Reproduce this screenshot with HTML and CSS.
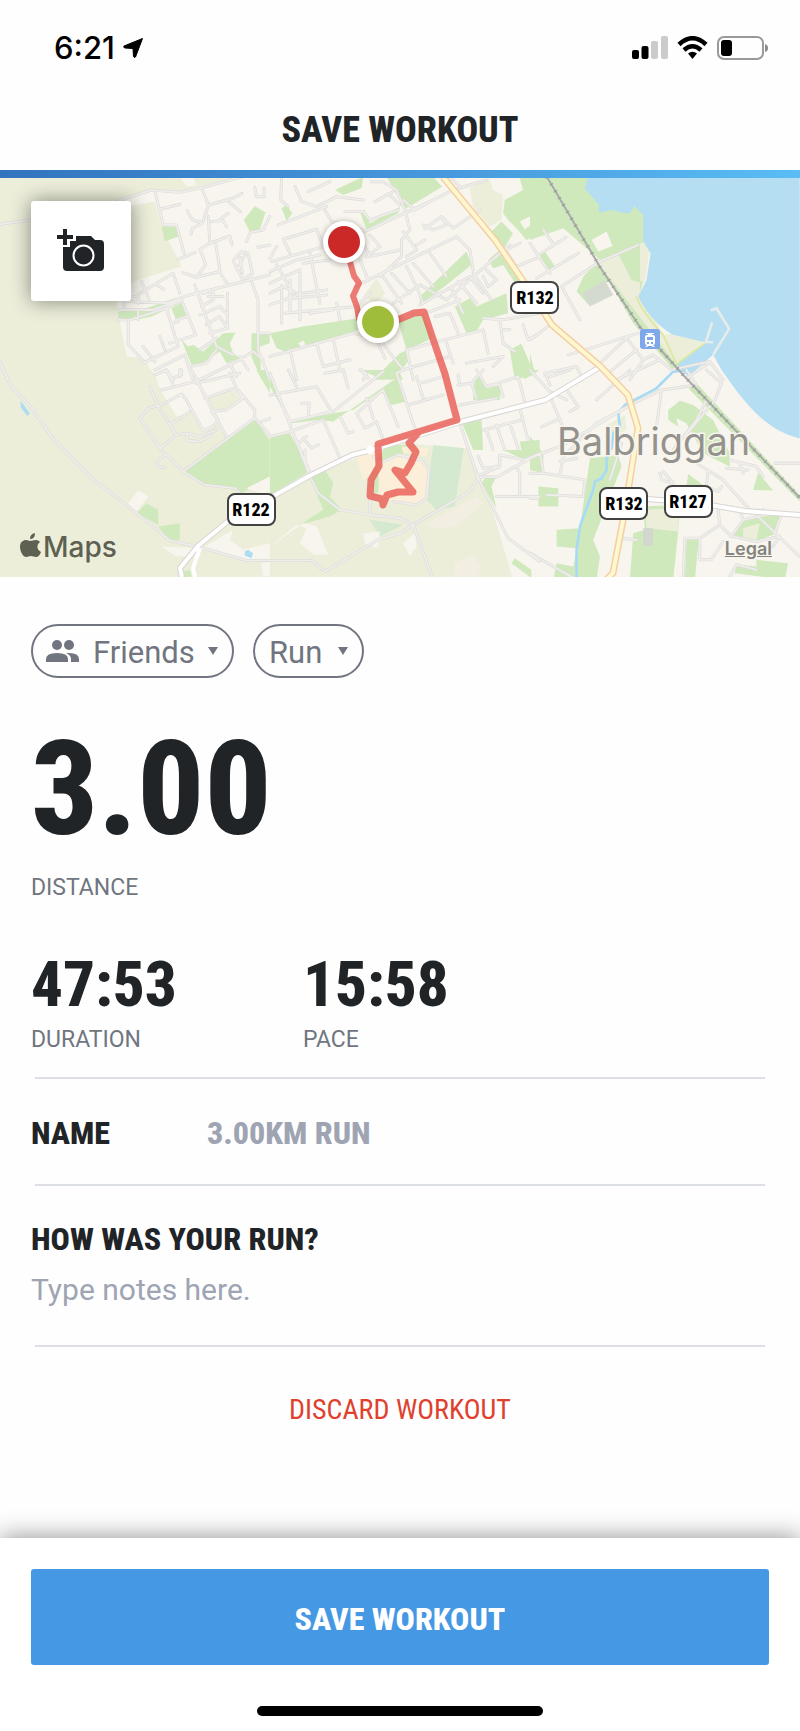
FILE: index.html
```html
<!DOCTYPE html>
<html lang="en">
<head>
<meta charset="utf-8">
<meta name="viewport" content="width=device-width, initial-scale=1">
<title>Save Workout</title>
<link rel="stylesheet" href="styles.css">
</head>
<body>
<div class="status">
  <div class="status-time">6:21
    <svg width="20" height="20" viewBox="0 0 20 20"><path d="M19.500 .500 12.500 19Q11 20 10.500 18.500L10 10.500 2 10Q0 9.500 1 8Z" stroke="#000" stroke-linejoin="round"/></svg>
  </div>
  <div class="status-icons">
    <svg width="36" height="24" viewBox="0 0 36 24"><rect y="14" width="7" height="9" rx="2"/><rect x="9.500" y="10" width="7" height="13" rx="2"/><g fill="#cbcbcb"><rect x="19" y="5" width="7" height="18" rx="2"/><rect x="29" y="0" width="7" height="23" rx="2"/></g></svg>
    <svg width="31" height="24" viewBox="0 0 31 24"><g fill="none" stroke="#000" stroke-width="4.500"><path d="M2 8.500Q15.500-4 29 8.500"/><path d="M7 14Q15.500 6.500 24 14"/></g><path d="M11 17.500Q15.500 14 20 17.500L15.500 23Z"/></svg>
    <svg width="51" height="24" viewBox="0 0 51 24"><rect x="1" y="1" width="45" height="22" rx="6" fill="none" stroke="#999" stroke-width="2"/><rect x="4" y="4" width="11" height="16" rx="3"/><path d="M48 8Q51 9 51 12T48 16Z" fill="#888"/></svg>
  </div>
</div>
<header class="header"><h1>SAVE WORKOUT</h1></header>
<div class="accent"></div>

<section class="map" aria-label="Workout route">
<svg class="map-art" viewBox="0 178 800 399" preserveAspectRatio="xMidYMid slice">
<defs>
  <g id="minor">
    <path transform="translate(0 170) scale(.333)" d="M0 163 90 150M350 95 455 60 540 67 610 52 730 20M465 62 490 165H530L553 250M480 118 540 103M535 268 585 248M605 52 626 105 608 160 578 150 562 122M608 160 578 175 574 192M626 105 680 90 722 125M680 90 700 84 726 70M626 140 630 220 600 238 618 285 590 322 550 308M630 220 690 198 697 225M648 222 662 310 685 345M590 322 660 305M660 150 685 130M636 155 670 152 680 170M765 52 770 80H793V55M740 215 752 187 790 180 810 140M775 232 810 225M725 245 700 272 728 328 758 312 745 250ZM720 262 728 310M735 255 718 285M380 395 520 310 540 370M425 335 448 390M400 380H415V400M470 345 492 358M385 395 500 400 560 378 810 315M355 420H460L545 390M372 395V420M415 420V450M355 450H390L500 415 535 530 435 578 385 525V455M500 415 545 390 588 495 510 520M430 530 465 575M480 500 495 540M530 450 560 440M515 460 535 455M465 600 555 555 580 630M500 600 520 630M540 600V620M585 345 650 530 700 555M610 370 640 365V390L605 410M625 380 670 380M600 435 660 410 683 435M620 465 660 440 683 475M630 490 683 475V370M600 540 650 505M750 320 775 390V540L810 630M775 490H810M570 590 620 580 650 540M600 630 700 580 760 545 790 570M690 580 710 620M720 560 745 600M0 575 22 630"/>
    <path transform="translate(270 170) scale(.333)" d="M35 20 32 90 55 110M75 50 95 95 140 110 200 80 280 90M115 65 180 35M25 165 170 110M40 208 140 178 160 230 5 275M40 208 60 250M0 265 20 230M165 120 185 155 280 180M225 125 280 125 300 150 385 120M305 35H340L380 60 405 120 420 180 395 210V260L330 320M315 95 370 65M285 185 480 95 550 60 650 30M360 75 390 105M400 90 435 120 480 95M465 175 515 140 530 165 490 180 460 165M515 140 550 175 630 120M400 185 440 240 410 260M440 225 465 210M300 195 330 230 290 260M280 220 300 260 390 240M270 270 295 330M255 350 560 200 600 240 610 300M410 290 440 350 460 400M340 320 395 400M365 310 420 370M430 280 490 350M480 250 530 320M370 400 450 345 530 390 720 225M450 405 600 320 640 370M545 355 580 430M565 335 620 400M610 310 665 390M640 320 655 350 680 330 650 300M470 430 570 390M0 305 80 270 150 255M0 340 90 300M0 370 40 350 90 375M0 405 100 370 170 360M35 345V460M60 330V425M90 310V450M120 250 150 400M20 285 70 370M100 280 180 270M70 385 170 375M45 430 260 410 300 370M200 400 210 450M120 430 190 420M410 540 640 480 655 550M410 540 430 630M495 440 540 430 565 490M530 520 550 580M640 445 700 450 810 430M690 450 700 520 735 545M700 480H720M760 465 775 510 810 490M590 580 700 560 670 590M0 560 250 490 330 510 400 600 540 560M60 540 80 630M140 520 160 590 240 570M190 510 210 600M270 600 290 610 280 630M320 510 345 565M700 230 740 290 810 260M710 240 750 220M540 20 570 50"/>
    <path transform="translate(530 170) scale(.333)" d="M0 220 60 310M25 255 108 202M40 180 72 225M20 325 145 250M95 350 210 275 325 225M95 350 150 450M0 510 60 465M115 555 325 490M290 505 340 570 300 630M340 570 370 555 425 600 540 575 580 630M195 595 290 505M235 610 320 540M260 630 390 570M45 610 140 590 155 620M470 625 540 577"/>
    <path transform="translate(0 370) scale(.333)" d="M10 0 35 50 95 115 155 200 270 320 410 430 510 512 610 535 740 572H810M450 50 475 110 530 195 480 235M470 108 445 115 420 145 480 235 550 305 615 345 705 355 725 375M495 255 470 275 475 292H495M475 110 545 72 560 90 610 182 640 170M510 165 570 125M530 195 560 190 600 200 650 180M560 190 563 212 600 215 635 195M465 15 500 0M485 60 585 35 640 10M500 0 520 45M545 0V15L515 25M575 0 680 200M590 40 720 10M615 85 700 55 730 85 680 120 635 125M690 10 710 55 765 120V145L550 305M640 170 655 150 640 130M765 145 810 195M785 155 810 145"/>
    <path transform="translate(270 370) scale(.333)" d="M0 75 140 50 185 125 60 155 25 80M55 0 80 50M0 10 120 320 145 370 210 420 300 435 390 445 430 465 390 490 325 510 165 605 125 572H0M430 465 490 630M430 465 600 365 625 325 570 160M625 325 715 505 810 575M625 325 640 320 680 322 810 250M190 125 340 5M95 100 118 100 115 140M0 200 60 185 160 150 210 265M70 190 120 310M100 205 125 235 145 225M105 240V270M110 200 85 220M210 140 235 190 250 185M260 130 285 175 320 155 340 210M290 85 310 145M260 130 340 60 385 170M380 10 440 190M380 10 400 0M415 105 520 75M440 20 460 85M450 40 520 20M570 105 680 85M565 45 605 40 620 85M565 15 570 45M605 40 640 0M620 0 650 50 745 20 765 95M650 50 660 45 690 45 700 80M640 180 755 150M650 180 670 240M680 165 705 240M720 160 745 235M750 115 775 210M625 260 640 295 690 290V255L765 270 810 250M690 290 620 320M740 290 750 310V380M680 380H810M275 0 295 25M165 10 220 0 235 55M300 380V435M330 280 385 255 455 270 478 300 470 385 440 405 370 395M310 260 330 280"/>
    <path transform="translate(530 370) scale(.333)" d="M0 265 100 225 310 100 395 60 500 45 470 0M310 100 200 160 100 260 90 315M395 60 380 170M0 0 60 65 110 90M60 80 105 185M110 60 145 110 120 125M35 170 90 145M45 10 60 45M60 20 120 0M150 25 100 55M200 90 300 0M530 0 575 40 555 90 465 200M240 330 275 220M30 250 40 310 165 330 160 380 50 375M0 310 40 310M90 275 140 265M0 385 25 385M390 310 395 330 430 340 400 305M530 90 500 150 430 240M500 280 580 330 660 420M535 300 530 350 565 365 575 350M590 295 655 300M630 280 640 310M735 280H810M600 270 680 290 700 320M565 420 570 465 510 505 465 505 460 630M570 465 605 500 640 450 630 420M640 450 685 440 700 420M685 440 810 560M610 500 680 515 750 500 730 530M510 505V570M510 570H545L580 515M755 435 735 490M620 585 600 620M620 585 680 600M270 505 320 510M0 550 140 630"/>
  </g>
</defs>
<rect y="170" width="800" height="410" fill="#f8f5ee"/>
<g transform="translate(0 170) scale(.333)">
  <path fill="#eceeda" d="M0 20H540L560 50 590 45 580 20H720L600 48 540 62 455 58 350 90V115L465 95 485 170 545 290 400 335 350 400 380 560 430 565 475 635H0Z"/>
  <path fill="#cfe9bd" d="M485 170H530L535 200 495 215ZM765 108 797 128 780 180 750 185 732 150ZM355 425 415 420V450L355 445ZM418 422 525 385 530 405 455 440 418 448ZM515 415 545 397 560 440 530 455ZM545 510 565 530 580 525 610 545 650 510 670 490 707 488 690 520 700 550 720 565 680 580 660 545 600 585H575ZM755 490H810V520L780 530 785 630 755 560Z"/>
</g>
<g transform="translate(270 170) scale(.333)">
  <path fill="#cfe9bd" d="M195 60 280 20 275 55 220 75ZM35 115 50 105 67 130 50 153ZM270 125 285 120 300 160 390 110 385 130 290 180ZM350 20H490L517 50 405 118ZM0 490 100 470 265 445 270 480 50 547 20 535ZM450 380 590 245 605 285 530 345 450 405ZM555 410 600 385 620 410 710 370 715 430 640 450 620 485 590 490ZM385 455 460 430 490 505 410 540ZM310 630 390 550 415 540V575L370 630ZM720 540 755 522 795 615 735 630ZM750 25 810 10V190L770 210 740 175 715 150 700 130 705 90 760 60ZM665 185 695 155 730 190 700 240 670 215ZM655 270 690 240 770 330 740 345 700 285 670 295Z"/>
  <path fill="#eceeda" d="M600 55 660 25 670 60 700 75 695 150 660 170 610 110ZM280 380 320 325 345 370 320 400Z"/>
  <path fill="#f8f5ee" d="M750 155 780 140 790 160 765 178ZM85 520 100 512 110 530 95 532Z"/>
</g>
<g transform="translate(530 170) scale(.333)">
  <path fill="#cfe9bd" d="M0 20H190L220 100H300L345 130V215L330 225 340 335 330 370 450 590 430 600 310 460 235 330 180 410 140 365 160 320 210 270 100 175 0 210ZM25 255 45 245 75 290 60 305ZM0 550 15 610 0 620Z"/>
  <path fill="#eceeda" d="M205 280 265 250 305 330 345 335 360 230 345 215 330 222 330 380 400 495 450 490 525 515 440 585Z"/>
  <path fill="#cfe9bd" d="M270 250 330 222V338L305 330Z"/>
  <path fill="#d5dad1" d="M158 370 225 330 250 375 180 410Z"/><path fill="#f8f5ee" d="M185 210 230 185 248 228 205 245Z"/>
  <path fill="#b5def2" d="M175 20H810V806C720 785 660 725 575 600L550 555 475 620 440 585 530 518 430 495C390 475 345 425 325 380L350 330 362 250 340 215V135L313 108 300 130 270 128 250 120 207 128V105L165 55Z"/>
  <path fill="none" stroke="#dce89d" stroke-width="5" d="M318 380Q340 430 400 495L440 583 525 520"/>
  <path fill="none" stroke="#e5ece9" stroke-width="8" d="M550 555 598 477 560 415 543 422M527 520 547 457M525 515 550 518"/>
</g>
<g transform="translate(0 370) scale(.333)">
  <path fill="#eceeda" d="M0 0H455L485 65 530 140 580 125 605 185 650 155 680 200 810 320V630H0ZM615 85 690 55 720 85 680 120 640 125Z"/>
  <path fill="#cfe9bd" d="M550 305 765 145 810 210V320L725 370 700 352 615 345ZM410 430 440 400 475 420V465ZM475 470 540 460V510L510 515ZM550 605 570 600 575 620 550 625ZM770 0H795L810 30V70Z"/>
  <path fill="#f8f5ee" d="M385 400 415 362 445 380 410 425ZM485 530 600 535 590 560H530ZM615 530 700 480 690 510 730 540 810 520V575L740 570ZM785 580 810 575V620H790ZM740 355 810 320V380Z"/>
  <path fill="#aedcf0" d="M62 92 90 130 82 138 62 112ZM735 545 745 540 760 550 755 565 735 557Z"/>
</g>
<g transform="translate(270 370) scale(.333)">
  <path fill="#eceeda" d="M0 390 125 320 255 265 330 245 400 220 590 235 635 325 680 460 730 630H0Z"/>
  <path fill="#cfe9bd" d="M0 200 60 190 120 305 0 375ZM0 20 65 160 145 150 190 155 385 20 405 95 365 105 335 60 250 120 190 130 60 155 0 50ZM270 0H385L400 30 320 20ZM120 325 165 300 190 340 180 380 215 420 180 440 90 465 160 420ZM350 225 410 225 480 240 470 260 385 250 320 280 330 360 310 380 300 300ZM575 155 635 150 640 240 610 240ZM615 20 630 10 650 55 695 45 690 90 610 90ZM750 0H810L765 28ZM750 215 810 210V260L765 270 700 240 755 240ZM645 325 680 320 665 350 680 415 635 340ZM735 565 785 600V625L725 580Z"/>
  <path fill="#d4e9cf" d="M490 225 582 235 555 410 500 420 470 390ZM300 450 400 465 330 500Z"/>
  <path fill="#fbefd9" d="M260 265 325 240 315 300 280 330ZM330 280 385 255 455 270 478 300 470 385 440 405 370 395 325 370ZM395 230 480 235 470 260 400 250Z"/>
  <path fill="#f8f5ee" d="M0 530 80 465 110 475 90 520 130 555 175 555 140 470 100 460M280 490 330 485 325 535 285 520ZM400 520 435 490 440 530 420 560Z"/>
  <path fill="#f2efe2" d="M470 460 620 380 640 400 560 470 500 475ZM555 580 610 555 635 590 620 630H555Z"/>
</g>
<g transform="translate(530 370) scale(.333)">
  <path fill="#cfe9bd" d="M0 200 40 250V310L0 300ZM25 350 85 355V410H25ZM180 265 265 255 275 290 190 510 210 560 200 630H70L80 580 130 590 140 535 80 530V480L150 475ZM415 120 450 92 490 105 550 150 600 250 600 290 520 250 470 160 440 145 445 170 415 150ZM475 45 505 45 810 375V395L480 60ZM475 312 520 345 470 345ZM340 410 450 405 445 485 430 630H300L310 490 345 480ZM610 500 640 445 755 435 740 490 680 515ZM685 308 730 362 670 360ZM470 510H507L495 630H465ZM620 585 680 590V570L775 580 765 630 615 610Z"/>
  <path fill="#eceeda" d="M230 165 285 135 290 180 250 200ZM345 420 445 415V485L350 475ZM640 475 690 460 680 510 640 505Z"/><path fill="#d2d8ce" d="M340 475H370V528H340Z"/>
  <path fill="none" stroke="#a7dbf5" stroke-width="8" stroke-linejoin="round" d="M480 0 430 5 380 55 285 105 265 130 270 170 250 190 245 235 230 265V300L215 325 195 335 190 360 175 400 150 470 140 540V630"/>
</g>
<use href="#minor" class="road-edge"/><use href="#minor" class="road-fill"/>
<g fill="none" stroke-linejoin="round">
  <path d="M182 577 180 568 198 546 227 522 270 498 311 475 352 455 372 450 460 422 545 400 600 367" stroke="#d8d6d4" stroke-width="6"/>
  <path d="M182 577 180 568 198 546 227 522 270 498 311 475 352 455 372 450 460 422 545 400 600 367M195 577 193 568 200 548" stroke="#fff" stroke-width="4"/>
  <path d="M648 499 660 500 710 505 745 511 800 515" stroke="#d8d6d4" stroke-width="6"/><path d="M648 499 660 500 710 505 745 511 800 515" stroke="#fff" stroke-width="4"/>
  <path d="M443 177 495 240 526 285 552 325 600 366 628 395 638 428 625 510 613 573 606 580" stroke="#f5cfa4" stroke-width="7"/>
  <path d="M443 177 495 240 526 285 552 325 600 366 628 395 638 428 625 510 613 573 606 580" stroke="#fff7cf" stroke-width="4"/>
  <path d="M547 177 600 267 640 327 686 378 740 435 800 498" stroke="#aaa" stroke-width="2"/>
  <path d="M547 177 600 267 640 327 686 378 740 435 800 498" stroke="#999" stroke-width="4" stroke-dasharray="1 7"/>
</g>
<circle cx="370" cy="450" r="4" fill="#fff"/>
<g fill="none" stroke="#e95e57" stroke-opacity=".82" stroke-linecap="round" stroke-linejoin="round">
  <path stroke-width="6" d="M350 262 354 276 359 283 353 296 357 307 359 319"/>
  <path stroke-width="7" d="M395 321 414 313 424 312 434 342 445 374 457 420 378 444 379 466 371 480 370 496 382 499 383 505 387 495 398 492 413 492 395 470 405 473 411 463 416 452 409 443 418 433"/>
</g>
<g class="pin" fill="#fff"><circle cx="344" cy="242" r="21"/><circle cx="378" cy="322" r="21"/></g>
<circle cx="344" cy="242" r="16" fill="#ca2928"/><circle cx="378" cy="322" r="16" fill="#9fbd3b"/>
<rect x="640" y="329" width="20" height="20" rx="3" fill="#7fa8ea"/>
<path fill="#fff" fill-rule="evenodd" d="M646 333h8v1h-2v1h1q2 0 2 2v6q0 2-2 2l2 2h-2l-1-1h-4l-1 1h-2l2-2q-2 0-2-2v-6q0-2 2-2h1v-1h-2ZM647 337v3h6v-3ZM647 342v2h2v-2ZM651 342v2h2v-2Z"/>
<text class="town" x="557" y="455">Balbriggan</text>
<g class="shield">
  <rect x="511" y="282" width="47" height="31" rx="7"/><text x="535" y="304">R132</text>
  <rect x="228" y="494" width="47" height="31" rx="7"/><text x="251" y="516">R122</text>
  <rect x="600" y="488" width="47" height="31" rx="7"/><text x="624" y="510">R132</text>
  <rect x="665" y="486" width="47" height="31" rx="7"/><text x="688" y="508">R127</text>
</g>
<path fill="#5e6052" d="M35 533q-5 1-5 6 5 0 5-6ZM30 541c2 0 4-1 6-1 2 0 3 1 4 2-4 3-3 8 1 10-1 3-3 5-5 5-2 0-3-1-5-1s-3 1-5 1c-3 0-6-6-6-10 0-5 3-7 6-7 2 0 3 1 4 1Z"/>
<text class="maps" x="43" y="557">Maps</text>
</svg>
<button class="photo" type="button" aria-label="Add photo">
  <svg width="48" height="44" viewBox="0 0 48 44"><path fill="#212427" d="M7 18H13V12H19V7H34L38 11H43Q47 11 47 15V38Q47 42 43 42H10Q6 42 6 38V18ZM0 6H6V0H10V6H16V10H10V16H6V10H0Z"/><circle cx="26.500" cy="26.500" r="10" fill="none" stroke="#fff" stroke-width="2"/></svg>
</button>
<a class="legal" href="#legal">Legal</a>
</section>

<main class="content">
  <div class="chips">
    <label class="chip chip-friends">
      <svg width="34" height="22" viewBox="0 0 34 22"><circle cx="11" cy="5" r="5"/><circle cx="23" cy="5" r="5"/><path d="M0 22V19Q0 13 11 13T22 19V22ZM20 13Q33 12 33 19V22H25V19Q25 15 20 13"/></svg>
      <select aria-label="Who can see this"><option>Friends</option></select>
      <span class="caret"></span>
    </label>
    <label class="chip chip-run">
      <select aria-label="Activity"><option>Run</option></select>
      <span class="caret"></span>
    </label>
  </div>
  <div class="distance">3.00</div>
  <div class="caption distance-caption">DISTANCE</div>
  <div class="stats">
    <div><div class="stat">47:53</div><div class="caption">DURATION</div></div>
    <div><div class="stat">15:58</div><div class="caption">PACE</div></div>
  </div>
  <div class="name-row">
    <label for="name">NAME</label>
    <input id="name" type="text" placeholder="3.00KM RUN">
  </div>
  <div class="notes">
    <label for="notes">HOW WAS YOUR RUN?</label>
    <textarea id="notes" rows="1" placeholder="Type notes here."></textarea>
  </div>
  <button class="discard" type="button">DISCARD WORKOUT</button>
</main>
<footer class="footer">
  <button class="save" type="button">SAVE WORKOUT</button>
  <div class="home"></div>
</footer>
</body>
</html>
```
FILE: styles.css
```css
* { box-sizing: border-box; }
body {
  --narrow: "Roboto Condensed", "Liberation Sans Narrow", "Liberation Sans", sans-serif;
  --ink: #212427;
  --grey: #70757f;
  margin: 0;
  min-height: 100vh;
  display: flex;
  flex-direction: column;
  background: #fefefe;
  color: var(--ink);
  font-family: Roboto, sans-serif;
}
button, input, textarea, select {
  margin: 0;
  padding: 0;
  border: 0;
  background: none;
  font: inherit;
  color: inherit;
}
.status {
  height: 96px;
  padding: 0 32px 0 54px;
  display: flex;
  align-items: center;
  justify-content: space-between;
  color: #000;
}
.status-time {
  display: flex;
  align-items: center;
  gap: 8px;
  font: 500 31px/36px Inter, sans-serif;
}
.status-icons { display: flex; align-items: center; gap: 9px; }
.header { height: 74px; display: flex; justify-content: center; padding-top: 14px; }
.header h1 { margin: 0; font: 800 36px/40px var(--narrow); }
.accent { height: 8px; background: linear-gradient(90deg, #3274bd, #4595da 50%, #5abdf5); }

.map { position: relative; overflow: hidden; }
.map-art { display: block; width: 100%; }
.road-edge, .road-fill { fill: none; stroke-linejoin: round; stroke-linecap: round; }
.road-edge { stroke: #dddcda; stroke-width: 9; }
.road-fill { stroke: #f0eeeb; stroke-width: 5; }
.pin { filter: drop-shadow(0 1px 3px rgb(0 0 0 / 35%)); }
.town {
  font: 400 38px Inter, sans-serif;
  fill: #94928c;
  stroke: #f8f5ee;
  stroke-width: 3px;
  paint-order: stroke;
}
.maps { font: 500 28px Inter, sans-serif; fill: #5e6052; }
.shield rect { fill: #fff; stroke: #424242; stroke-width: 2px; }
.shield text { font: 800 18px "Roboto Condensed", "Liberation Sans Narrow", "Liberation Sans", sans-serif; text-anchor: middle; fill: #000; }
.photo {
  position: absolute;
  left: 31px;
  top: 23px;
  width: 100px;
  height: 100px;
  padding: 4px 0 0;
  border-radius: 3px;
  background: #fff;
  box-shadow: 0 0 20px rgb(0 0 0 / 45%);
}
.legal {
  position: absolute;
  right: 28px;
  bottom: 16px;
  color: #85837d;
  font: 600 18px/24px Inter, sans-serif;
}

.content { flex: 1; padding: 47px 31px 40px; }
.chips { display: flex; gap: 19px; }
.chip {
  height: 54px;
  display: flex;
  align-items: center;
  border: 2px solid var(--grey);
  border-radius: 27px;
  color: var(--grey);
  font-size: 31px;
  line-height: 36px;
}
.chip svg { fill: var(--grey); }
.chip select { appearance: none; height: 40px; padding-top: 3px; line-height: 36px; }
.chip-friends { padding: 0 14px 0 13px; gap: 13px; }
.chip-run { padding: 0 14px; gap: 15px; }
.caret { border: 5px solid transparent; border-top: 8px solid var(--grey); border-bottom: 0; }
.distance { margin-top: 41px; font: 800 132px/140px var(--narrow); }
.caption { color: var(--grey); font-size: 23px; line-height: 28px; }
.distance-caption { margin-top: 15px; }
.stats { display: grid; grid-template-columns: 272px 1fr; margin-top: 48px; }
.stat { margin-bottom: 6px; font: 800 63px/70px var(--narrow); }
.name-row {
  height: 109px;
  margin: 23px 4px 0;
  padding-top: 2px;
  border: solid #dcdfe3;
  border-width: 2px 0;
  display: flex;
  align-items: center;
  font: 800 32px/36px var(--narrow);
}
.name-row label { width: 176px; margin-left: -4px; }
.name-row input { flex: 1; min-width: 0; }
::placeholder { color: #9fa4b3; opacity: 1; }
.notes { margin: 0 4px; padding: 35px 0; border-bottom: 2px solid #dcdfe3; }
.notes label { display: block; margin-left: -4px; font: 800 32px/36px var(--narrow); }
.notes textarea {
  display: block;
  width: 100%;
  height: 40px;
  margin: 13px -4px 0;
  resize: none;
  overflow: hidden;
  font-size: 30px;
  line-height: 40px;
}
.discard { display: block; margin: 47px auto 0; color: #df412d; font: 400 28px/32px var(--narrow); }
.footer { padding: 31px 31px 15px; background: #fff; box-shadow: 0 0 24px rgb(0 0 0 / 45%); }
.save {
  width: 100%;
  height: 96px;
  padding-top: 4px;
  border-radius: 3px;
  background: #4598e3;
  color: #fff;
  font: 800 32px/36px var(--narrow);
}
.home { width: 286px; height: 10px; margin: 41px auto 0; border-radius: 5px; background: #000; }
```
